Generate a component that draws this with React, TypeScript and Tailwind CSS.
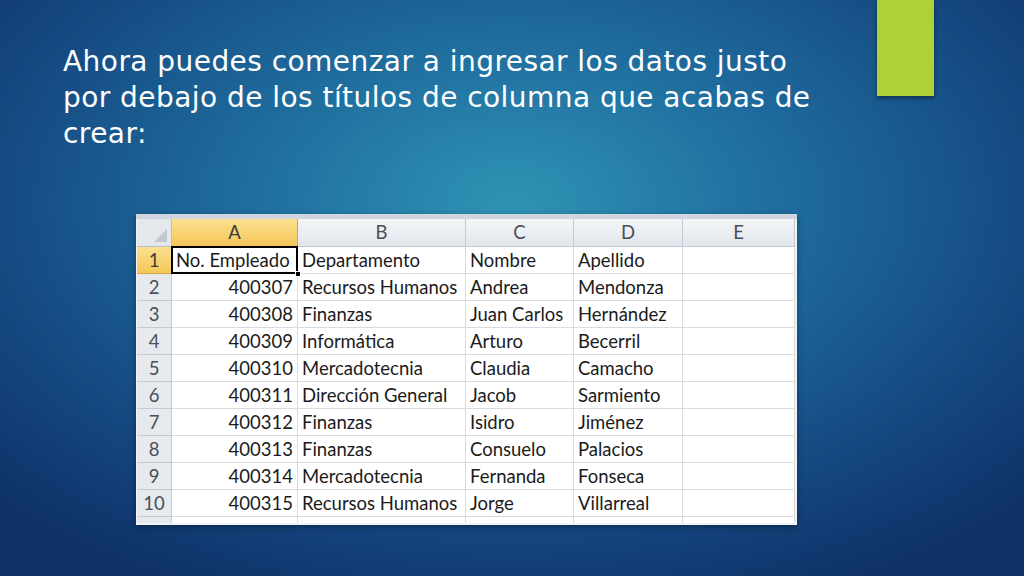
import React from "react";

const rows = [
  ["400307", "Recursos Humanos", "Andrea", "Mendonza"],
  ["400308", "Finanzas", "Juan Carlos", "Hernández"],
  ["400309", "Informática", "Arturo", "Becerril"],
  ["400310", "Mercadotecnia", "Claudia", "Camacho"],
  ["400311", "Dirección General", "Jacob", "Sarmiento"],
  ["400312", "Finanzas", "Isidro", "Jiménez"],
  ["400313", "Finanzas", "Consuelo", "Palacios"],
  ["400314", "Mercadotecnia", "Fernanda", "Fonseca"],
  ["400315", "Recursos Humanos", "Jorge", "Villarreal"],
];

const cols = ["A", "B", "C", "D", "E"];

function Sheet() {
  const cell = "h-[27px] border-r border-b border-[#d8dce2] flex items-center px-[4px] text-[#1b1b1b] whitespace-nowrap overflow-visible";
  const rowHead = "h-[27px] border-r border-b border-[#c4cad3] bg-[#e6e9ee] flex items-center justify-center text-[#4a4f57]";
  return (
    <div className="w-[661px] bg-[#f1f3f6] border-t-[5px] border-[#cfd6df] pl-[1px] pr-[2px] pb-[2px] shadow-[0_2px_6px_rgba(0,0,0,0.35)]">
      <div
        className="grid grid-cols-[35px_126px_168px_108px_109px_112px] bg-white text-[18.5px] leading-none"
        style={{ fontFamily: "Lato, 'Open Sans', sans-serif" }}
      >
        {/* header row */}
        <div className="h-[28px] border-r border-b border-[#b9c0ca] bg-[#e4e8ed] flex items-end justify-end p-[4px]">
          <div className="w-0 h-0 border-l-[13px] border-l-transparent border-b-[13px] border-b-[#c3c8cf]" />
        </div>
        {cols.map((c) => (
          <div
            key={c}
            className={
              "h-[28px] border-r border-b flex items-center justify-center " +
              (c === "A"
                ? "bg-gradient-to-b from-[#fbe08e] to-[#f5c658] border-[#d6a73b] text-[#3b3b3b]"
                : "bg-gradient-to-b from-[#f3f5f8] to-[#e2e6ec] border-[#c4cad3] text-[#4a4f57]")
            }
          >
            {c}
          </div>
        ))}

        {/* row 1 */}
        <div className="h-[27px] border-r border-b border-[#d6a73b] bg-gradient-to-b from-[#fbe08e] to-[#f5c658] flex items-center justify-center text-[#3b3b3b]">
          1
        </div>
        <div className={cell + " relative"}>
          <div className="absolute inset-[-1px] border-[2px] border-black" />
          <div className="absolute right-[-4px] bottom-[-4px] w-[6px] h-[6px] bg-black border border-white" />
          <span className="relative">No. Empleado</span>
        </div>
        <div className={cell}>Departamento</div>
        <div className={cell}>Nombre</div>
        <div className={cell}>Apellido</div>
        <div className={cell}></div>

        {rows.map((r, i) => (
          <React.Fragment key={i}>
            <div className={rowHead}>{i + 2}</div>
            <div className={cell + " justify-end"}>{r[0]}</div>
            <div className={cell}>{r[1]}</div>
            <div className={cell}>{r[2]}</div>
            <div className={cell}>{r[3]}</div>
            <div className={cell}></div>
          </React.Fragment>
        ))}

        <div className="h-[6px] border-r border-[#c4cad3] bg-[#e6e9ee]" />
        <div className="h-[6px] border-r border-[#d8dce2]" />
        <div className="h-[6px] border-r border-[#d8dce2]" />
        <div className="h-[6px] border-r border-[#d8dce2]" />
        <div className="h-[6px] border-r border-[#d8dce2]" />
        <div className="h-[6px] border-r border-[#d8dce2]" />
      </div>
    </div>
  );
}

export default function App() {
  return (
    <div className="w-[1024px] h-[576px] overflow-hidden bg-[radial-gradient(ellipse_70%_75%_at_50%_35%,#2e93b4_0%,#1e6a9c_40%,#14477f_75%,#0e3168_100%)] flex flex-col relative">
      <div className="absolute left-[877px] top-0 w-[57px] h-[96px] bg-[#aed136] shadow-[0_2px_4px_rgba(0,0,0,0.45)]" />
      <div className="flex">
        <h1
          className="mt-[44px] ml-[63px] text-white text-[28px] leading-[36px] font-normal whitespace-nowrap"
          style={{ fontFamily: "'DejaVu Sans', sans-serif", letterSpacing: "0.45px" }}
        >
          Ahora puedes comenzar a ingresar los datos justo
          <br />
          por debajo de los títulos de columna que acabas de
          <br />
          crear:
        </h1>
      </div>
      <div className="mt-[62px] ml-[136px]">
        <Sheet />
      </div>
    </div>
  );
}
